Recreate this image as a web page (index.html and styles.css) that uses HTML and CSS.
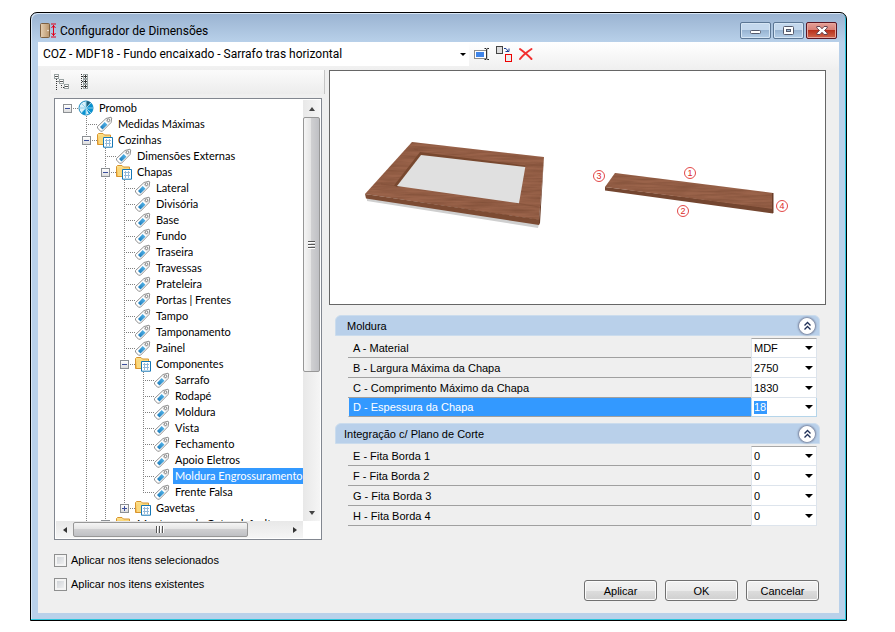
FILE: index.html
```
<!DOCTYPE html>
<html lang="pt-BR">
<head>
<meta charset="utf-8">
<title>Configurador de Dimensões</title>
<link rel="stylesheet" href="styles.css">
</head>
<body>
<svg class="defs" aria-hidden="true">
  <defs>
    <linearGradient id="tagBlue" x1="0" y1="1" x2="1" y2="0"><stop offset="0" stop-color="#1673b4"/><stop offset="1" stop-color="#5cbdf0"/></linearGradient>
    <linearGradient id="gold" x1="0" y1="0" x2="0" y2="1"><stop offset="0" stop-color="#fde58f"/><stop offset="1" stop-color="#f3b548"/></linearGradient>
    <linearGradient id="door" x1="0" y1="0" x2="1" y2="0"><stop offset="0" stop-color="#e6cfb2"/><stop offset="1" stop-color="#b8946b"/></linearGradient>
    <symbol id="tag" viewBox="0 0 16 16">
      <path d="M.5 10.5 9 2.5 14 1.2 14.7 2 14.1 6.5 5.500 15.2 3.500 15.2 .5 12Z" fill="#fff" stroke="#909090"/>
      <path d="M3 11 7.700 6 10.500 8.8 5.500 13.4Z" fill="url(#tagBlue)"/>
      <path d="M9.700 3.6 13.3 2.5 13 6 11.500 7.5 8.500 4.7Z" fill="#d8d8d8"/>
      <circle cx="11.500" cy="4.2" r="1.3" fill="#fff" stroke="#888"/>
    </symbol>
    <symbol id="folder" viewBox="0 0 16 16">
      <path d="M.5 12.5V2.5L1.5 1.5H6L7.5 3H13.5V12.5Z" fill="url(#gold)" stroke="#d8942f"/>
      <path d="M2 12V6.500L4 5H13V12Z" fill="#fbd97d"/>
      <path d="M6.5 5.5h9v9.700h-9Z" fill="#fff" stroke="#1677b5"/>
      <path d="M8 8.500h6M8 11.500h6M9.500 7v7M12.500 7v7" stroke="#93b9da" fill="none"/>
    </symbol>
  </defs>
</svg>
<main class="window">
  <header class="titlebar">
    <svg class="app-icon" width="16" height="16" viewBox="0 0 16 16" aria-hidden="true">
      <rect x=".5" y=".5" width="9" height="14" rx="1" fill="url(#door)" stroke="#7d5f40"/>
      <circle cx="8" cy="7.500" r=".7" fill="#fff"/>
      <path d="M11 1h5M11 14h5M13.500 2v11M11.500 5l2-2.500 2 2.500M11.500 10l2 2.500 2-2.500" stroke="#e3001b" fill="none"/>
    </svg>
    <h1>Configurador de Dimensões</h1>
    <div class="caption-buttons">
      <button type="button" aria-label="Minimizar"><svg width="12" height="10" viewBox="0 0 12 10"><rect x=".5" y="4.5" width="10" height="3" rx="1" fill="#fff" stroke="#54596b"/></svg></button>
      <button type="button" aria-label="Maximizar"><svg width="12" height="10" viewBox="0 0 12 10"><rect x=".5" y=".5" width="10" height="8" rx="1" fill="#fff" stroke="#54596b"/><rect x="3.5" y="3.5" width="4" height="2" fill="#9ab6d3" stroke="#54596b"/></svg></button>
      <button type="button" class="close" aria-label="Fechar"><svg width="12" height="10" viewBox="0 0 12 10"><path d="M.8.5H4L6 2.8 8 .5H11.2V2L8.5 4.5 11.2 7V8.5H8L6 6.3 4 8.5H.8V7L3.5 4.5.8 2Z" fill="#fff" stroke="#65424d"/></svg></button>
    </div>
  </header>

  <div class="client">
    <div class="toolbar">
      <label class="combo model"><select aria-label="Modelo"><option>COZ - MDF18 - Fundo encaixado - Sarrafo tras horizontal</option></select></label>
      <button type="button" class="tool" aria-label="Renomear"><svg width="16" height="16" viewBox="0 0 16 16"><rect x=".5" y="4.5" width="12" height="8" fill="#fff" stroke="#8c8c8c"/><rect x="2" y="6" width="8" height="5" fill="#3f84e8"/><path d="M10.500 2.500h1.500l.7.7.7-.7H15M12.700 3v9.500M10.500 13.500h1.500l.7-.7.7.7H15" fill="none" stroke="#222"/></svg></button>
      <button type="button" class="tool" aria-label="Substituir"><svg width="17" height="17" viewBox="0 0 17 17"><rect x="1.500" y=".5" width="6" height="7" fill="#ddd" stroke="#444"/><path d="M9 2.500h2L13 5M10.500 5.500h3.500V2.500" fill="none" stroke="#1c3f94"/><rect x="10.500" y="8.500" width="6" height="7" fill="#ededed" stroke="#e00"/></svg></button>
      <button type="button" class="tool" aria-label="Excluir"><svg width="16" height="16" viewBox="0 0 16 16"><path d="M3 3C7 6 11 9 14.500 13M14.500 3C10 6 6 9 3 13" fill="none" stroke="#f23030" stroke-width="2" stroke-linecap="round"/></svg></button>
    </div>

    <div class="panes">
      <section class="sidebar">
        <div class="tree-tools">
          <button type="button" class="tool" aria-label="Expandir"><svg width="16" height="16" viewBox="0 0 16 16"><path d="M2.500 5v11M2.500 7.500H6M7.500 11v2.500H11" stroke="#333" stroke-dasharray="1 1" fill="none"/><g fill="#fff" stroke="#9aa3a3"><rect x=".5" y=".5" width="4" height="4"/><rect x="5.500" y="5.500" width="4" height="4"/><rect x="10.500" y="10.500" width="4" height="4"/></g><path d="M1 2.500h3M6 7.500h3M11 12.500h3" stroke="#555"/></svg></button>
          <button type="button" class="tool" aria-label="Recolher"><svg width="10" height="16" viewBox="0 0 10 16"><path d="M1.500 0v16M2 2.500h2M2 7.500h2M2 12.500h2" stroke="#333" stroke-dasharray="1 1" fill="none"/><g fill="#fff" stroke="#9aa3a3"><rect x="3.500" y=".5" width="4" height="4"/><rect x="3.500" y="5.500" width="4" height="4"/><rect x="3.500" y="10.500" width="4" height="4"/></g><path d="M4 2.500h3M5.500 1v3M4 7.500h3M5.500 6v3M4 12.500h3M5.500 11v3" stroke="#333"/></svg></button>
        </div>
        <div class="tree-box">
          <div class="tree-view">
            <ul class="tree">
              <li>
                <div class="node"><span class="joint"><button type="button" class="toggle" aria-label="Recolher Promob"></button></span><svg class="icon" viewBox="0 0 16 16"><circle cx="8" cy="8" r="7" fill="#d9f1fb" stroke="#1687bd"/><path d="M8 8 12.500 2.500A7 7 0 0 1 15 8ZM8 8H15A7 7 0 0 1 11 14.300ZM8 8V15A7 7 0 0 1 3.500 13.300Z" fill="#0992d1"/><path d="M8 8 8 1A7 7 0 0 1 12.500 2.500Z" fill="#1d607c"/><path d="M1 8H15M3 3 13 13M8 1V15M3 13 13 3" stroke="#8fd0ea"/></svg><span class="label">Promob</span></div>
                <ul>
                  <li><div class="node"><span class="joint"></span><svg class="icon"><use href="#tag"/></svg><span class="label">Medidas Máximas</span></div></li>
                  <li class="continues">
                    <div class="node"><span class="joint"><button type="button" class="toggle" aria-label="Recolher Cozinhas"></button></span><svg class="icon"><use href="#folder"/></svg><span class="label">Cozinhas</span></div>
                    <ul>
                      <li><div class="node"><span class="joint"></span><svg class="icon"><use href="#tag"/></svg><span class="label">Dimensões Externas</span></div></li>
                      <li>
                        <div class="node"><span class="joint"><button type="button" class="toggle" aria-label="Recolher Chapas"></button></span><svg class="icon"><use href="#folder"/></svg><span class="label">Chapas</span></div>
                        <ul>
                          <li><div class="node"><span class="joint"></span><svg class="icon"><use href="#tag"/></svg><span class="label">Lateral</span></div></li>
                          <li><div class="node"><span class="joint"></span><svg class="icon"><use href="#tag"/></svg><span class="label">Divisória</span></div></li>
                          <li><div class="node"><span class="joint"></span><svg class="icon"><use href="#tag"/></svg><span class="label">Base</span></div></li>
                          <li><div class="node"><span class="joint"></span><svg class="icon"><use href="#tag"/></svg><span class="label">Fundo</span></div></li>
                          <li><div class="node"><span class="joint"></span><svg class="icon"><use href="#tag"/></svg><span class="label">Traseira</span></div></li>
                          <li><div class="node"><span class="joint"></span><svg class="icon"><use href="#tag"/></svg><span class="label">Travessas</span></div></li>
                          <li><div class="node"><span class="joint"></span><svg class="icon"><use href="#tag"/></svg><span class="label">Prateleira</span></div></li>
                          <li><div class="node"><span class="joint"></span><svg class="icon"><use href="#tag"/></svg><span class="label">Portas | Frentes</span></div></li>
                          <li><div class="node"><span class="joint"></span><svg class="icon"><use href="#tag"/></svg><span class="label">Tampo</span></div></li>
                          <li><div class="node"><span class="joint"></span><svg class="icon"><use href="#tag"/></svg><span class="label">Tamponamento</span></div></li>
                          <li><div class="node"><span class="joint"></span><svg class="icon"><use href="#tag"/></svg><span class="label">Painel</span></div></li>
                          <li>
                            <div class="node"><span class="joint"><button type="button" class="toggle" aria-label="Recolher Componentes"></button></span><svg class="icon"><use href="#folder"/></svg><span class="label">Componentes</span></div>
                            <ul>
                              <li><div class="node"><span class="joint"></span><svg class="icon"><use href="#tag"/></svg><span class="label">Sarrafo</span></div></li>
                              <li><div class="node"><span class="joint"></span><svg class="icon"><use href="#tag"/></svg><span class="label">Rodapé</span></div></li>
                              <li><div class="node"><span class="joint"></span><svg class="icon"><use href="#tag"/></svg><span class="label">Moldura</span></div></li>
                              <li><div class="node"><span class="joint"></span><svg class="icon"><use href="#tag"/></svg><span class="label">Vista</span></div></li>
                              <li><div class="node"><span class="joint"></span><svg class="icon"><use href="#tag"/></svg><span class="label">Fechamento</span></div></li>
                              <li><div class="node"><span class="joint"></span><svg class="icon"><use href="#tag"/></svg><span class="label">Apoio Eletros</span></div></li>
                              <li><div class="node"><span class="joint"></span><svg class="icon"><use href="#tag"/></svg><span class="label selected">Moldura Engrossuramento</span></div></li>
                              <li><div class="node"><span class="joint"></span><svg class="icon"><use href="#tag"/></svg><span class="label">Frente Falsa</span></div></li>
                            </ul>
                          </li>
                          <li><div class="node"><span class="joint"><button type="button" class="toggle closed" aria-label="Expandir Gavetas"></button></span><svg class="icon"><use href="#folder"/></svg><span class="label">Gavetas</span></div></li>
                        </ul>
                      </li>
                      <li><div class="node"><span class="joint"><button type="button" class="toggle" aria-label="Recolher Montagem"></button></span><svg class="icon"><use href="#folder"/></svg><span class="label">Montagem de Cotas default</span></div></li>
                    </ul>
                  </li>
                </ul>
              </li>
            </ul>
          </div>
          <div class="scroll vertical" aria-hidden="true"><i class="arrow up"></i><div class="track"><div class="thumb"><i class="grip"></i></div></div><i class="arrow down"></i></div>
          <div class="scroll horizontal" aria-hidden="true"><i class="arrow left"></i><div class="track"><div class="thumb"><i class="grip"></i></div></div><i class="arrow right"></i></div>
        </div>
      </section>

      <section class="details">
        <div class="preview">
          <svg viewBox="330 71 495 233" role="img" aria-label="Moldura e sarrafo com as bordas 1 a 4">
            <defs>
              <filter id="wood" x="0" y="0" width="100%" height="100%" color-interpolation-filters="sRGB">
                <feTurbulence type="fractalNoise" baseFrequency=".03 .4" numOctaves="3" seed="4"/>
                <feColorMatrix values="0 0 0 0 .36  0 0 0 0 .2  0 0 0 0 .12  .6 0 0 0 -.18"/>
                <feComposite in2="SourceGraphic" operator="in" result="grain"/>
                <feMerge><feMergeNode in="SourceGraphic"/><feMergeNode in="grain"/></feMerge>
              </filter>
            </defs>
            <path d="M367 198 539 224 538 228 367 201Z" fill="#cfcfcf"/>
            <path d="M412 142 544 157 539 220 365 194Z" fill="#9a634a" filter="url(#wood)"/>
            <path d="M365 194 539 219.500 539 225 366 198.500Z" fill="#7c4b33"/>
            <path d="M544 157 539 219.500V225L540 223Z" fill="#6d3f2a"/>
            <path d="M381 184 397 186M516 203 539 207M418 150 414 149M525 165 543 164" stroke="#835039" stroke-width=".7"/>
            <path d="M420 152 525 165.500V168L397 187 394 185.500Z" fill="#78482f"/>
            <path d="M421 155 525.300 167 519 203.300 397 186Z" fill="#e0e0e0"/>
            <path d="M605 187 773 208 773 213.500 605 190.500Z" fill="#744630"/>
            <path d="M615 173 773 193 773 209 605 187Z" fill="#9a634a" filter="url(#wood)"/>
            <path d="M772 193h1.500V213H772Z" fill="#6a3d28"/>
            <g class="callouts"><circle cx="690" cy="173" r="5.500"/><circle cx="683" cy="211" r="5.500"/><circle cx="599" cy="176" r="5.500"/><circle cx="782" cy="206" r="5.500"/><text x="690" y="176">1</text><text x="683" y="214">2</text><text x="599" y="179">3</text><text x="782" y="209">4</text></g>
          </svg>
        </div>

        <section class="group">
          <header class="group-head"><h2>Moldura</h2><button type="button" aria-label="Recolher Moldura"><svg width="9" height="10" viewBox="0 0 9 10"><path d="M1.500 4.500 4.500 1.500 7.500 4.500M1.500 8.500 4.500 5.500 7.500 8.500" fill="none" stroke="#1f2f57" stroke-width="1.300"/></svg></button></header>
          <div class="field"><label for="fa">A - Material</label><span class="combo"><select id="fa"><option>MDF</option></select></span></div>
          <div class="field"><label for="fb">B - Largura Máxima da Chapa</label><span class="combo"><select id="fb"><option>2750</option></select></span></div>
          <div class="field"><label for="fc">C - Comprimento Máximo da Chapa</label><span class="combo"><select id="fc"><option>1830</option></select></span></div>
          <div class="field active"><label for="fd">D - Espessura da Chapa</label><span class="combo"><select id="fd"><option>18</option></select></span></div>
        </section>
        <section class="group">
          <header class="group-head wide"><h2>Integração c/ Plano de Corte</h2><button type="button" aria-label="Recolher Integração"><svg width="9" height="10" viewBox="0 0 9 10"><path d="M1.500 4.500 4.500 1.500 7.500 4.500M1.500 8.500 4.500 5.500 7.500 8.500" fill="none" stroke="#1f2f57" stroke-width="1.300"/></svg></button></header>
          <div class="field"><label for="fe">E - Fita Borda 1</label><span class="combo"><select id="fe"><option>0</option></select></span></div>
          <div class="field"><label for="ff">F - Fita Borda 2</label><span class="combo"><select id="ff"><option>0</option></select></span></div>
          <div class="field"><label for="fg">G - Fita Borda 3</label><span class="combo"><select id="fg"><option>0</option></select></span></div>
          <div class="field"><label for="fh">H - Fita Borda 4</label><span class="combo"><select id="fh"><option>0</option></select></span></div>
        </section>
      </section>
    </div>

    <footer class="footer">
      <div class="checks">
        <label><input type="checkbox">Aplicar nos itens selecionados</label>
        <label><input type="checkbox">Aplicar nos itens existentes</label>
      </div>
      <div class="actions"><button type="button">Aplicar</button><button type="button">OK</button><button type="button">Cancelar</button></div>
    </footer>
  </div>
</main>
</body>
</html>
```
FILE: styles.css
```
* { box-sizing: border-box; }
body {
  margin: 0;
  height: 100vh;
  min-height: 600px;
  padding: 12px 48px 11px 30px;
  display: flex;
  background: #fff;
  color: #000;
  font: 11px/16px "Liberation Sans", Arial, sans-serif;
}
h1, h2, ul { margin: 0; padding: 0; font: inherit; list-style: none; }
button, select, input { font: inherit; color: inherit; margin: 0; }
.defs { position: absolute; width: 0; height: 0; }

.window {
  flex: 1;
  min-width: 0;
  display: flex;
  flex-direction: column;
  padding: 0 7px 7px;
  border: 1px solid #000;
  border-radius: 7px 7px 0 0;
  background: linear-gradient(#9ab3d1, #b9d1ea 30px);
  box-shadow: inset -1px -1px #2cc5dc, inset 1px 1px #d9e7f5;
}
.titlebar { display: flex; align-items: center; height: 29px; padding: 6px 2px 0; gap: 4px; }
.titlebar h1 { flex: 1; font: 12px/16px Roboto, "Open Sans", sans-serif; }
.caption-buttons { display: flex; gap: 2px; align-self: flex-start; padding-top: 3px; }
.caption-buttons button {
  display: grid;
  place-items: center;
  width: 31px;
  height: 17px;
  padding: 0;
  border: 1px solid #5b7694;
  border-radius: 2px;
  background: linear-gradient(#c4d8ed 50%, #98b4d2 50%, #b5cfe9);
  box-shadow: inset 0 0 0 1px #d5e5f4;
}
.caption-buttons .close {
  border-color: #5a1522;
  background: linear-gradient(#e4a098, #d77c72 50%, #b8311c 50%, #d0674c);
  box-shadow: inset 0 0 0 1px #e7a79e;
}

.client { flex: 1; min-height: 0; display: flex; flex-direction: column; background: #efefef; }
.toolbar {
  display: flex;
  align-items: center;
  gap: 5px;
  height: 28px;
  padding-bottom: 4px;
  background: linear-gradient(#fff, #efefef);
}
.tool { display: grid; place-items: center; padding: 0; border: 0; background: none; }

.combo { display: grid; align-items: center; background: #fff; }
.combo select {
  grid-area: 1 / 1;
  width: 100%;
  height: 100%;
  padding: 0 16px 0 2px;
  border: 0;
  background: none;
  appearance: none;
}
.combo::after {
  content: "";
  grid-area: 1 / 1;
  justify-self: end;
  margin-right: 3px;
  border: solid transparent;
  border-width: 4px 4px 0;
  border-top-color: #000;
  pointer-events: none;
}
.combo.model { flex: 0 1 431px; height: 24px; font: 12px/16px Roboto, "Open Sans", sans-serif; }
.combo.model select { padding-left: 5px; }
.combo.model::after { border-width: 3px 3px 0; }

.panes { flex: 1; min-height: 0; display: grid; grid-template-columns: 291px minmax(0, 1fr); }
.sidebar { display: flex; flex-direction: column; min-height: 0; padding: 0 4px 0 13px; }
.tree-tools {
  display: flex;
  gap: 10px;
  height: 24px;
  padding-left: 3px;
  border-right: 1px solid #c5c5c5;
  background: linear-gradient(#fbfbfb, #ececec);
}
.tree-box {
  flex: 1;
  min-height: 0;
  display: grid;
  grid-template: minmax(0, 1fr) 17px / minmax(0, 1fr) 17px;
  margin: 4px 3px 0;
  padding: 1px;
  border: 1px solid #828790;
  background: #fff;
}
.tree-view { min-height: 0; overflow: hidden; padding-left: 7px; font-family: Lato, "Liberation Sans", sans-serif; }
.tree ul { margin-left: 19px; }
.tree ul > li {
  background: repeating-linear-gradient(#808080 0 1px, transparent 1px 2px) 4px 0 / 1px 100% no-repeat;
}
.tree ul > li:last-child { background-size: 1px 8px; }
.tree ul > li.continues { background-size: 1px 100%; }
.node { display: grid; grid-template-columns: 15px 16px max-content; height: 16px; }
.joint {
  display: grid;
  align-items: center;
  background: repeating-linear-gradient(90deg, #808080 0 1px, transparent 1px 2px) 4px 8px / 11px 1px no-repeat;
}
.icon { width: 16px; height: 16px; }
.toggle {
  width: 9px;
  height: 9px;
  padding: 0;
  border: 1px solid #8c9094;
  background:
    linear-gradient(#3b4f9c, #3b4f9c) center / 5px 1px no-repeat,
    linear-gradient(#fff, #ddd);
}
.toggle.closed {
  background:
    linear-gradient(#3b4f9c, #3b4f9c) center / 5px 1px no-repeat,
    linear-gradient(#3b4f9c, #3b4f9c) center / 1px 5px no-repeat,
    linear-gradient(#fff, #ddd);
}
.label { margin-left: 3px; padding: 0 2px; white-space: nowrap; }
.label.selected { background: #3399ff; color: #fff; }

.scroll { display: flex; }
.scroll.vertical { flex-direction: column; background: linear-gradient(90deg, #e8e8e8, #f5f5f5); }
.scroll.horizontal { background: linear-gradient(#e8e8e8, #f5f5f5); }
.track { flex: 1; min-width: 0; min-height: 0; }
.arrow { display: grid; place-items: center; width: 17px; height: 17px; }
.arrow::before { content: ""; border: 3px solid transparent; }
.arrow.up::before { border-width: 0 3px 4px; border-bottom-color: #444; }
.arrow.down::before { border-width: 4px 3px 0; border-top-color: #444; }
.arrow.left::before { border-width: 3px 4px 3px 0; border-right-color: #333; }
.arrow.right::before { border-width: 3px 0 3px 4px; border-left-color: #333; }
.thumb { display: grid; place-items: center; border: 1px solid #979797; border-radius: 2px; }
.vertical .thumb { height: 66%; background: linear-gradient(90deg, #f5f5f5, #e3e3e3 50%, #cfcfd1 50%, #bfc0c4); }
.horizontal .thumb { width: 82%; height: 15px; margin-top: 1px; background: linear-gradient(#f5f5f5, #e3e3e3 50%, #cfcfd1 50%, #bfc0c4); }
.vertical .grip { width: 7px; height: 8px; background: repeating-linear-gradient(#555 0 1px, #fff 1px 2px, transparent 2px 3px); }
.horizontal .grip { width: 8px; height: 7px; background: repeating-linear-gradient(90deg, #555 0 1px, #fff 1px 2px, transparent 2px 3px); }

.details { padding-right: 13px; }
.preview { border: 1px solid #666; background: #fff; }
.preview svg { display: block; width: 100%; height: auto; }
.callouts { fill: none; stroke: #e34848; }
.callouts text { fill: #dc2929; stroke: none; font: 9px "Liberation Sans", sans-serif; text-anchor: middle; }

.group { margin: 10px 6px 0; }
.group + .group { margin-top: 6px; }
.group-head {
  display: flex;
  align-items: center;
  height: 21px;
  padding: 0 4px 0 11px;
  border: 1px solid #cbdced;
  border-radius: 6px 6px 0 0;
  background: #b9d0ea;
}
.group-head.wide { padding-left: 8px; }
.group-head h2 { flex: 1; }
.group-head button {
  display: grid;
  place-items: center;
  width: 16px;
  height: 16px;
  padding: 0;
  border: 1px solid #fff;
  border-radius: 50%;
  background: #fff;
  box-shadow: 0 0 2px 1px #77809a;
}
.field {
  display: grid;
  grid-template-columns: minmax(0, 1fr) 66px;
  height: 20px;
  margin: 0 3px 0 13px;
}
.group-head + .field { height: 22px; padding-top: 2px; }
.field label { padding: 2px 0 0 5px; border-bottom: 1px solid #a0a0a0; }
.field .combo { border: solid #dde4ec; border-width: 0 1px 1px; }
.group-head + .field .combo { border-top: 1px solid #a8a8a8; }
.field.active { height: 19px; }
.field.active label { padding: 1px 0 0 4px; border-left: 1px solid #efefef; background: #3399ff; color: #fff; }
.field.active .combo { border-color: #b5d5ea; }
.field.active select {
  color: #fff;
  background: linear-gradient(#3399ff, #3399ff) 2px 3px / 13px 13px no-repeat;
}

.footer { display: flex; justify-content: space-between; height: 73px; padding: 12px 20px 12px 16px; }
.checks { display: grid; gap: 8px; align-content: start; }
.checks label { display: flex; align-items: center; gap: 4px; }
.checks input {
  appearance: none;
  width: 13px;
  height: 13px;
  border: 1px solid #8e8f8f;
  background: linear-gradient(135deg, #c9cdd2, #f6f6f6);
  box-shadow: inset 0 0 0 2px #f4f4f4;
}
.actions { display: flex; gap: 8px; align-self: flex-end; }
.actions button {
  width: 73px;
  height: 21px;
  padding: 0;
  border: 1px solid #707070;
  border-radius: 3px;
  background: linear-gradient(#f2f2f2, #ebebeb 50%, #dddddd 50%, #cfcfcf);
  box-shadow: inset 0 0 0 1px #fbfbfb;
}
```
